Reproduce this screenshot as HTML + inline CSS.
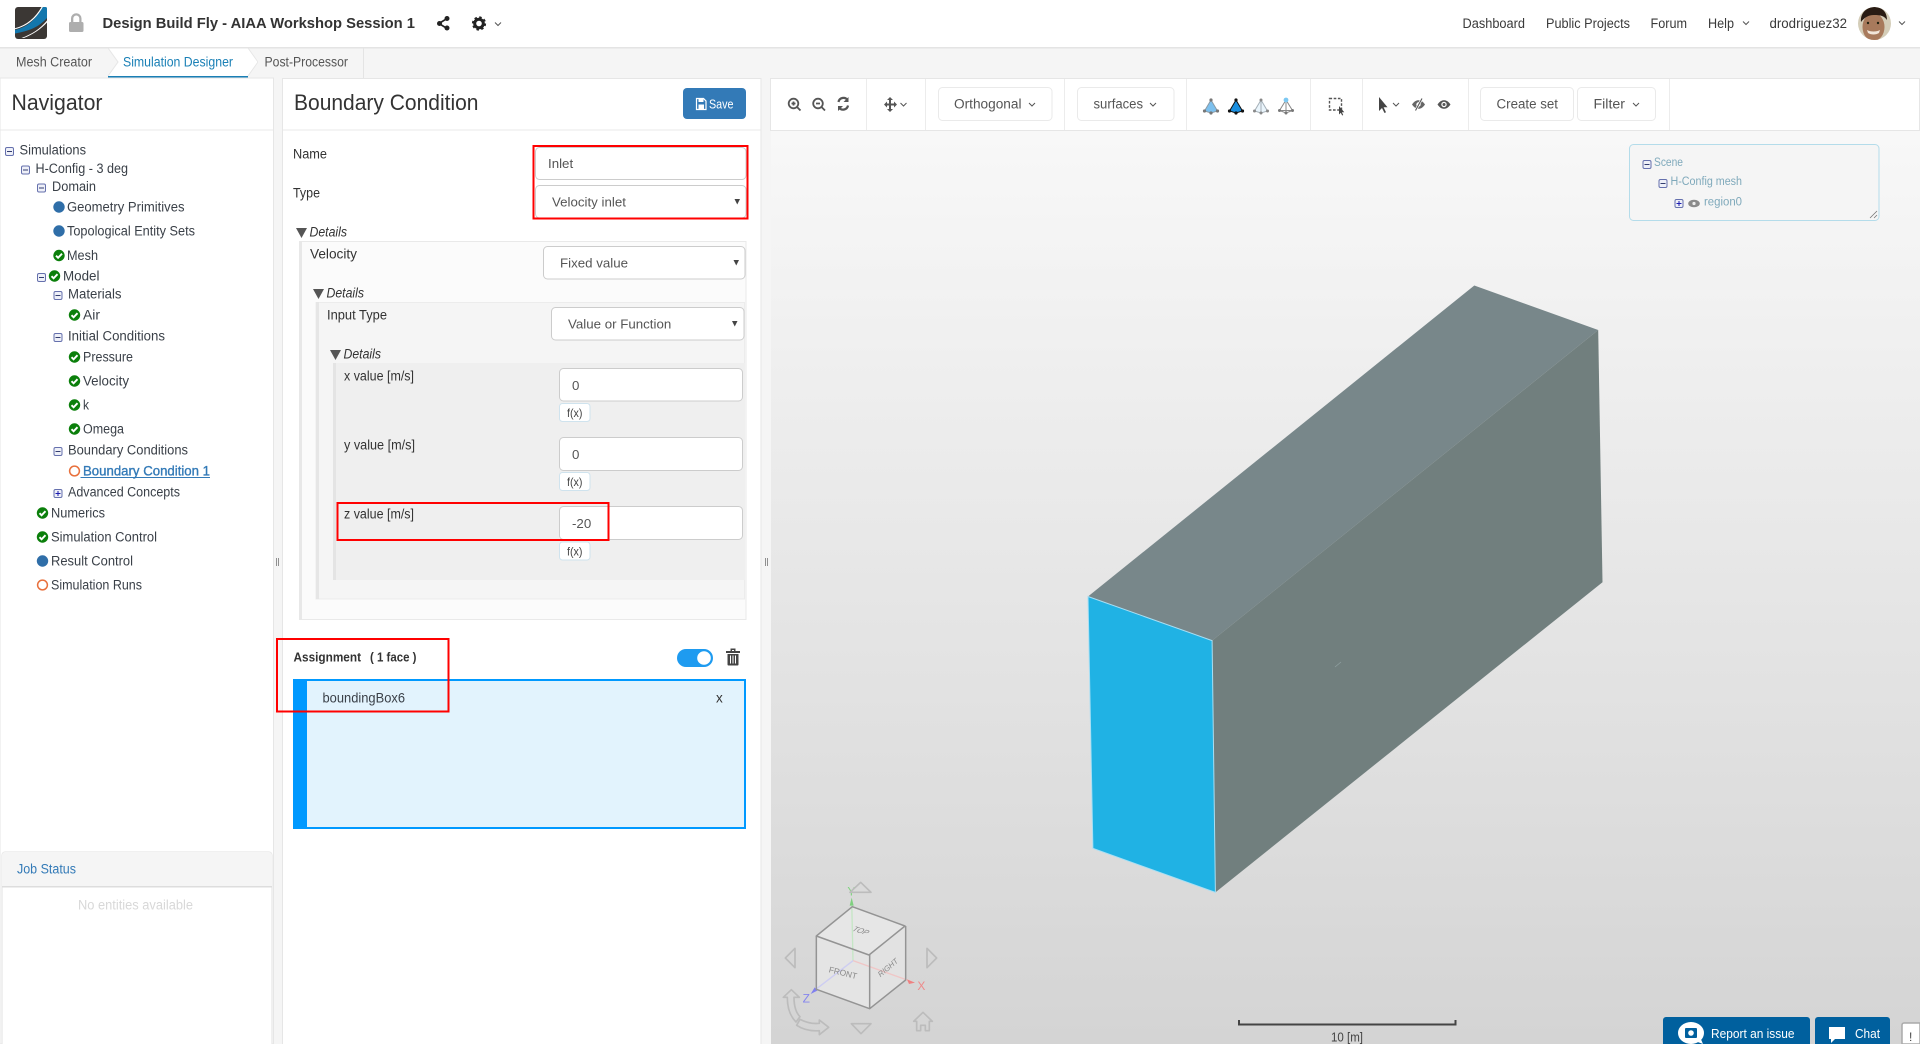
<!DOCTYPE html>
<html lang="en">
<head>
<meta charset="utf-8">
<title>Design Build Fly - AIAA Workshop Session 1</title>
<style>
html,body{margin:0;padding:0;width:1920px;height:1044px;overflow:hidden;background:#f5f5f5}
svg{display:block}
text{font-family:"Liberation Sans",sans-serif;dominant-baseline:central;fill:#333;font-size:13.5px}
.nav{fill:#3a3a3a;font-size:13.5px}
.tree{fill:#3a4048;font-size:13.5px}
.h{font-size:22px;fill:#333}
.sel{font-size:13.3px;fill:#555}
.it{font-style:italic;fill:#333;font-size:13.5px}
.fx{font-size:12px;fill:#444}
.tb{font-size:13.5px;fill:#555}
.sc{font-size:11.5px;fill:#7fa9bb}
.wh{fill:#fff;font-size:12.5px}
</style>
</head>
<body>
<svg width="1920" height="1044" viewBox="0 0 1920 1044" xmlns="http://www.w3.org/2000/svg">
<defs>
<linearGradient id="bg" x1="0" y1="0" x2="0" y2="1"><stop offset="0" stop-color="#f8f8f8"/><stop offset="1" stop-color="#d4d4d4"/></linearGradient>
<g id="mi"><rect x=".5" y=".5" width="8" height="8" rx="1.5" fill="#eef0f8" stroke="#6570ad"/><path d="M2 4.5h5" stroke="#333d70" stroke-width="1"/></g>
<g id="pl"><rect x=".5" y=".5" width="8" height="8" rx="1.5" fill="#eef0f8" stroke="#6570ad"/><path d="M2 4.5h5M4.5 2v5" stroke="#1c1cb0" stroke-width="1"/></g>
<g id="ck"><circle cx="0" cy="0" r="5.7" fill="#0b7f0b"/><path d="M-3 .2L-.9 2.3 3 -1.8" fill="none" stroke="#fff" stroke-width="1.9"/></g>
<circle id="bl" r="5.7" fill="#2f6ea8"/>
<circle id="or" r="4.9" fill="none" stroke="#e8703c" stroke-width="1.5"/>
<path id="car" d="M-3 -1.5L0 1.5 3 -1.5" fill="none" stroke="#555" stroke-width="1"/>
<path id="tri" d="M0 0h11L5.5 10z" fill="#555"/>
</defs>

<rect width="1920" height="1044" fill="#f5f5f5"/>

<!-- header -->
<rect width="1920" height="47" fill="#fff"/>
<rect y="47" width="1920" height="1.5" fill="#e4e4e4"/>
<rect x="15" y="7" width="32" height="32" rx="3" fill="#3b3734"/>
<path d="M47 8.500v9.500C39 27 29 31 15 33.500v-3.500C28 27 36 19 42.500 7H45.500a1.500 1.500 0 0 1 1.500 1.500z" fill="#1377ad"/>
<path d="M41.500 7C35 18 27 25 15 28.300v1C27.500 26 36 19 42.800 7z" fill="#fff"/>
<path d="M47 20.500C40 29 32 34 21.500 38h2.300C33 34.500 41 29 47 22.500z" fill="#fff"/>
<g fill="#aeaeae"><rect x="69" y="22" width="14.500" height="10" rx="1.500"/><path d="M71 22v-3.500a5.200 5.200 0 0 1 10.500 0V22h-2.200v-3.500a3 3 0 0 0-6 0V22z"/></g>
<text x="102.500" y="23.500" style="font-weight:bold;font-size:15px" textLength="312.500" lengthAdjust="spacingAndGlyphs">Design Build Fly - AIAA Workshop Session 1</text>
<g fill="#222"><circle cx="447" cy="18.500" r="2.500"/><circle cx="447" cy="28" r="2.500"/><circle cx="439.500" cy="23.500" r="2.500"/><path d="M439 22.500l8-5 .8 1.500-8 5zM439 24.500l8 5 .8-1.500-8-5z"/></g>
<g><circle cx="479" cy="23.500" r="4.300" fill="none" stroke="#222" stroke-width="3"/><circle cx="479" cy="23.500" r="6.200" fill="none" stroke="#222" stroke-width="1.800" stroke-dasharray="2.500 2.370"/></g>
<use href="#car" x="498" y="24"/>

<text x="1462.500" y="23.500" class="nav" textLength="62.500" lengthAdjust="spacingAndGlyphs">Dashboard</text>
<text x="1546" y="23.500" class="nav" textLength="84" lengthAdjust="spacingAndGlyphs">Public Projects</text>
<text x="1650.500" y="23.500" class="nav" textLength="36.500" lengthAdjust="spacingAndGlyphs">Forum</text>
<text x="1708" y="23.500" class="nav" textLength="26" lengthAdjust="spacingAndGlyphs">Help</text>
<use href="#car" x="1746" y="23"/>
<text x="1769.500" y="23.500" class="nav" textLength="77.500" lengthAdjust="spacingAndGlyphs">drodriguez32</text>
<clipPath id="av"><ellipse cx="1874.500" cy="23.500" rx="16.500" ry="16.500"/></clipPath>
<g clip-path="url(#av)">
<rect x="1857" y="6" width="35" height="35" fill="#d4cdb8"/>
<ellipse cx="1873.500" cy="27" rx="11" ry="14" fill="#a87a5c"/>
<path d="M1861 22c-1-10 7-15 13-15s13 3 13 13c-3-4-6-5-13-5-6 0-10 3-13 7z" fill="#2a1c14"/>
<path d="M1867 30c3 2 10 2 13 0l-1 3c-3 2-8 2-11 0z" fill="#f1e6da"/>
<circle cx="1868" cy="23" r="1.200" fill="#221"/><circle cx="1878" cy="23" r="1.200" fill="#221"/>
</g>
<use href="#car" x="1902" y="23"/>

<!-- tab bar -->
<rect y="48.500" width="363" height="29.500" fill="#f5f5f5"/>
<rect x="108" y="48.500" width="140" height="27.500" fill="#fff"/>
<path d="M108 48l10 14-10 14zM248 48l11 14-11 14z" fill="#fff"/>
<path d="M108 48l10 14-10 14" fill="#f5f5f5" stroke="#e6e6e6"/>
<path d="M248 48l10 14-10 14" fill="#fff" stroke="#e6e6e6"/>
<rect x="108" y="76" width="140" height="2.200" fill="#1a7fb5"/>
<rect x="363" y="48" width="1" height="30" fill="#e4e4e4"/>
<text x="16" y="62" style="fill:#555" textLength="76" lengthAdjust="spacingAndGlyphs">Mesh Creator</text>
<text x="123" y="62" style="fill:#1a80b6" textLength="110" lengthAdjust="spacingAndGlyphs">Simulation Designer</text>
<text x="264.500" y="62" style="fill:#555" textLength="83.500" lengthAdjust="spacingAndGlyphs">Post-Processor</text>

<!-- navigator panel -->
<rect x="0" y="78" width="273.500" height="966" fill="#fff" stroke="#e6e6e6"/>
<rect x="0" y="129.500" width="273" height="1" fill="#e8e8e8"/>
<text x="11.500" y="102.500" class="h" textLength="91" lengthAdjust="spacingAndGlyphs">Navigator</text>

<use href="#mi" x="5" y="147"/><text x="19.500" y="150" class="tree" textLength="66.500" lengthAdjust="spacingAndGlyphs">Simulations</text>
<use href="#mi" x="21" y="165.500"/><text x="35.500" y="168.500" class="tree" textLength="92.500" lengthAdjust="spacingAndGlyphs">H-Config - 3 deg</text>
<use href="#mi" x="37" y="183.500"/><text x="52" y="186.500" class="tree" textLength="44" lengthAdjust="spacingAndGlyphs">Domain</text>
<use href="#bl" x="59" y="207"/><text x="67" y="207" class="tree" textLength="117.500" lengthAdjust="spacingAndGlyphs">Geometry Primitives</text>
<use href="#bl" x="59" y="231"/><text x="67" y="231" class="tree" textLength="128" lengthAdjust="spacingAndGlyphs">Topological Entity Sets</text>
<use href="#ck" x="59" y="255.500"/><text x="67" y="255.500" class="tree" textLength="31" lengthAdjust="spacingAndGlyphs">Mesh</text>
<use href="#mi" x="37" y="273"/><use href="#ck" x="54.500" y="276"/><text x="63" y="276" class="tree" textLength="36.500" lengthAdjust="spacingAndGlyphs">Model</text>
<use href="#mi" x="53.500" y="291"/><text x="68" y="294" class="tree" textLength="53.500" lengthAdjust="spacingAndGlyphs">Materials</text>
<use href="#ck" x="74.500" y="315"/><text x="83" y="315" class="tree" textLength="17" lengthAdjust="spacingAndGlyphs">Air</text>
<use href="#mi" x="53.500" y="333"/><text x="68" y="336" class="tree" textLength="97" lengthAdjust="spacingAndGlyphs">Initial Conditions</text>
<use href="#ck" x="74.500" y="357"/><text x="83" y="357" class="tree" textLength="50" lengthAdjust="spacingAndGlyphs">Pressure</text>
<use href="#ck" x="74.500" y="381"/><text x="83" y="381" class="tree" textLength="46" lengthAdjust="spacingAndGlyphs">Velocity</text>
<use href="#ck" x="74.500" y="405"/><text x="83" y="405" class="tree" textLength="6" lengthAdjust="spacingAndGlyphs">k</text>
<use href="#ck" x="74.500" y="429"/><text x="83" y="429" class="tree" textLength="41" lengthAdjust="spacingAndGlyphs">Omega</text>
<use href="#mi" x="53.500" y="447"/><text x="68" y="450" class="tree" textLength="120" lengthAdjust="spacingAndGlyphs">Boundary Conditions</text>
<use href="#or" x="74.500" y="471"/><text x="83" y="471" style="fill:#337ab7;stroke:#337ab7;stroke-width:.35" textLength="127" lengthAdjust="spacingAndGlyphs">Boundary Condition 1</text>
<rect x="80.500" y="477" width="129.500" height="1" fill="#337ab7"/>
<use href="#pl" x="53.500" y="489"/><text x="68" y="492" class="tree" textLength="112" lengthAdjust="spacingAndGlyphs">Advanced Concepts</text>
<use href="#ck" x="42.500" y="513"/><text x="51" y="513" class="tree" textLength="54" lengthAdjust="spacingAndGlyphs">Numerics</text>
<use href="#ck" x="42.500" y="537"/><text x="51" y="537" class="tree" textLength="106" lengthAdjust="spacingAndGlyphs">Simulation Control</text>
<use href="#bl" x="42.500" y="561"/><text x="51" y="561" class="tree" textLength="82" lengthAdjust="spacingAndGlyphs">Result Control</text>
<use href="#or" x="42.500" y="585"/><text x="51" y="585" class="tree" textLength="91" lengthAdjust="spacingAndGlyphs">Simulation Runs</text>

<!-- job status -->
<rect x="2" y="852" width="270" height="200" rx="3" fill="#fff" stroke="#e2e2e2"/>
<path d="M2 887V855a3 3 0 0 1 3-3h264a3 3 0 0 1 3 3v32z" fill="#f5f5f5"/>
<rect x="2" y="886" width="270" height="1.500" fill="#ddd"/>
<text x="17" y="869" style="fill:#337ab7" textLength="59" lengthAdjust="spacingAndGlyphs">Job Status</text>
<text x="78" y="905" style="fill:#d8d8d8" textLength="115" lengthAdjust="spacingAndGlyphs">No entities available</text>

<!-- gutter handles -->
<path d="M276.500 558v8M278.500 558v8M765.500 558v8M767.500 558v8" stroke="#777" stroke-width=".8"/>

<!-- boundary condition panel -->
<rect x="282.500" y="78.500" width="478.500" height="966" fill="#fff" stroke="#e6e6e6"/>
<rect x="283" y="129.500" width="478" height="1" fill="#e8e8e8"/>
<text x="294" y="102.500" class="h" textLength="184.500" lengthAdjust="spacingAndGlyphs">Boundary Condition</text>
<rect x="683" y="88" width="63" height="31" rx="4" fill="#337ab7"/>
<path d="M696.500 98.500h7l2.500 2.500v8.500h-9.500z" fill="none" stroke="#fff" stroke-width="1.200"/>
<rect x="698.500" y="98.500" width="5" height="3.500" fill="#fff"/>
<rect x="698.500" y="104.500" width="5.500" height="4.500" fill="#fff"/>
<text x="709" y="104" style="fill:#fff;font-size:13px" textLength="24.500" lengthAdjust="spacingAndGlyphs">Save</text>

<text x="293" y="154" textLength="34" lengthAdjust="spacingAndGlyphs">Name</text>
<text x="293" y="193" textLength="27" lengthAdjust="spacingAndGlyphs">Type</text>
<rect x="535.500" y="147.500" width="210.500" height="32" rx="4" fill="#fff" stroke="#ccc"/>
<text x="548" y="163.500" class="sel">Inlet</text>
<rect x="535.500" y="185.500" width="210.500" height="32.500" rx="4" fill="#fff" stroke="#ccc"/>
<text x="552" y="202" class="sel">Velocity inlet</text>
<path d="M734.500 199h5.500l-2.750 5.500z" fill="#444"/>

<use href="#tri" x="296" y="228"/>
<text x="309.500" y="232" class="it" textLength="37.500" lengthAdjust="spacingAndGlyphs">Details</text>

<!-- nested box 1 -->
<rect x="299.500" y="241.500" width="446.500" height="378" fill="#fbfbfb" stroke="#e9e9e9"/>
<rect x="299" y="241" width="3" height="379" fill="#e8e8e8"/>
<text x="310" y="254" textLength="47" lengthAdjust="spacingAndGlyphs">Velocity</text>
<rect x="543.500" y="246.500" width="201.500" height="32.500" rx="4" fill="#fff" stroke="#ccc"/>
<text x="560" y="263" class="sel">Fixed value</text>
<path d="M733.500 260h5.500l-2.750 5.500z" fill="#444"/>
<use href="#tri" x="313" y="289"/>
<text x="326.500" y="293" class="it" textLength="37.500" lengthAdjust="spacingAndGlyphs">Details</text>

<!-- nested box 2 -->
<rect x="316" y="302.500" width="428.500" height="296.500" fill="#f5f5f5" stroke="#ececec"/>
<rect x="316" y="302" width="3" height="297" fill="#e6e6e6"/>
<text x="327" y="315" textLength="60" lengthAdjust="spacingAndGlyphs">Input Type</text>
<rect x="551.500" y="307.500" width="192.500" height="32.500" rx="4" fill="#fff" stroke="#ccc"/>
<text x="568" y="324" class="sel">Value or Function</text>
<path d="M732 321h5.500l-2.750 5.500z" fill="#444"/>
<use href="#tri" x="330" y="350"/>
<text x="343.500" y="354" class="it" textLength="37.500" lengthAdjust="spacingAndGlyphs">Details</text>

<!-- nested box 3 -->
<rect x="333" y="363" width="412" height="217" fill="#efefef"/>
<rect x="333" y="363" width="3" height="217" fill="#e4e4e4"/>
<text x="344" y="376" textLength="70" lengthAdjust="spacingAndGlyphs">x value [m/s]</text>
<rect x="559.500" y="368.500" width="183" height="32.500" rx="4" fill="#fff" stroke="#ccc"/>
<text x="572" y="385.500" class="sel">0</text>
<rect x="559.500" y="403.500" width="30.500" height="18" rx="3" fill="#fff" stroke="#cfe3ee"/>
<text x="567" y="413" class="fx" textLength="15.500" lengthAdjust="spacingAndGlyphs">f(x)</text>

<text x="344" y="445" textLength="71" lengthAdjust="spacingAndGlyphs">y value [m/s]</text>
<rect x="559.500" y="437.500" width="183" height="33" rx="4" fill="#fff" stroke="#ccc"/>
<text x="572" y="454.500" class="sel">0</text>
<rect x="559.500" y="472.500" width="30.500" height="18" rx="3" fill="#fff" stroke="#cfe3ee"/>
<text x="567" y="482" class="fx" textLength="15.500" lengthAdjust="spacingAndGlyphs">f(x)</text>

<text x="344" y="514" textLength="70" lengthAdjust="spacingAndGlyphs">z value [m/s]</text>
<rect x="559.500" y="506.500" width="183" height="33" rx="4" fill="#fff" stroke="#ccc"/>
<text x="572" y="523.500" class="sel">-20</text>
<rect x="559.500" y="542" width="30.500" height="18" rx="3" fill="#fff" stroke="#cfe3ee"/>
<text x="567" y="551.500" class="fx" textLength="15.500" lengthAdjust="spacingAndGlyphs">f(x)</text>

<!-- assignment -->
<text x="293.500" y="657" style="font-weight:bold;font-size:13px" textLength="67.500" lengthAdjust="spacingAndGlyphs">Assignment</text>
<text x="370" y="657" style="font-weight:bold;font-size:13px" textLength="46.500" lengthAdjust="spacingAndGlyphs">( 1 face )</text>
<rect x="677" y="649" width="36" height="18" rx="9" fill="#1e9bf0"/>
<circle cx="704" cy="658" r="6.800" fill="#fff"/>
<g fill="#444"><rect x="726" y="651" width="14" height="2"/><path d="M730.500 651v-2.500h5V651h-1.500v-1h-2v1z"/><path d="M727.500 654h11v10.500a1 1 0 0 1-1 1h-9a1 1 0 0 1-1-1z"/></g>
<path d="M730.500 655.500v8M733 655.500v8M735.500 655.500v8" stroke="#fff" stroke-width="1"/>
<rect x="294" y="680" width="451" height="148" fill="#e2f3fd" stroke="#0099ff" stroke-width="2"/>
<rect x="293" y="679" width="14" height="150" fill="#0099ff"/>
<text x="322.500" y="698" style="fill:#3a4048" textLength="82.500" lengthAdjust="spacingAndGlyphs">boundingBox6</text>
<text x="716" y="698" style="fill:#333">x</text>

<!-- viewer -->
<rect x="771" y="131" width="1149" height="913" fill="url(#bg)"/>
<rect x="770.500" y="78.500" width="1149" height="52" fill="#fff" stroke="#e6e6e6"/>
<path d="M866.500 79v51M925.500 79v51M1064.500 79v51M1186.500 79v51M1310.500 79v51M1362.500 79v51M1468.500 79v51M1669.500 79v51" stroke="#ececec"/>

<!-- toolbar icons -->
<g fill="none" stroke="#555" stroke-width="1.800">
<circle cx="793.500" cy="103.500" r="4.800"/><path d="M797 107l3.500 3.500M791.500 103.500h4M793.500 101.500v4"/>
<circle cx="818" cy="103.500" r="4.800"/><path d="M821.500 107l3.500 3.500M816 103.500h4"/>
<path d="M838.500 102a5 5 0 0 1 9-2M848 105.500a5 5 0 0 1-9 2" stroke-width="2.200"/>
</g>
<path d="M848.500 97v5h-5zM838 111v-5h5z" fill="#555"/>
<g fill="#555"><rect x="889" y="99" width="2" height="11"/><rect x="885" y="103.500" width="11" height="2"/><path d="M890 97l3 3h-6zM890 112l3-3h-6zM884 104.500l3-3v6zM897 104.500l-3-3v6z"/></g>
<use href="#car" x="903.500" y="104.500"/>
<rect x="938.500" y="87.500" width="113.500" height="33" rx="4" fill="#fff" stroke="#eaeaea"/>
<text x="954" y="104" class="tb" textLength="67.500" lengthAdjust="spacingAndGlyphs">Orthogonal</text>
<use href="#car" x="1032" y="104.500"/>
<rect x="1077.500" y="87.500" width="96.500" height="33" rx="4" fill="#fff" stroke="#eaeaea"/>
<text x="1093.500" y="104" class="tb" textLength="49.500" lengthAdjust="spacingAndGlyphs">surfaces</text>
<use href="#car" x="1153" y="104.500"/>

<!-- tetra icons -->
<g>
<path d="M1211 100l-6.500 11 6.500 2 6.500-2z" fill="#7cc0ee" stroke="#8a9aa5"/>
<g fill="#777"><circle cx="1211" cy="100" r="1.600"/><circle cx="1204.500" cy="111" r="1.600"/><circle cx="1217.500" cy="111" r="1.600"/><circle cx="1211" cy="113" r="1.600"/></g>
<path d="M1236 100l-6.500 11 6.500 2 6.500-2z" fill="#1a8fe0" stroke="#111"/>
<g fill="#111"><circle cx="1236" cy="100" r="1.600"/><circle cx="1229.500" cy="111" r="1.600"/><circle cx="1242.500" cy="111" r="1.600"/><circle cx="1236" cy="113" r="1.600"/></g>
<path d="M1261 100l-6.500 11 6.500 2 6.500-2zM1261 100v13" fill="#eaf5fc" stroke="#a5b0b8"/>
<g fill="#888"><circle cx="1261" cy="100" r="1.500"/><circle cx="1254.500" cy="111" r="1.500"/><circle cx="1267.500" cy="111" r="1.500"/><circle cx="1261" cy="113" r="1.500"/></g>
<path d="M1286 100l-6.500 10.500 6.500 2.500 6.500-2.500zM1286 100v13M1279.500 110.500h13" fill="none" stroke="#888"/>
<circle cx="1286" cy="100" r="2.400" fill="#7cc8f2"/>
<g fill="#777"><circle cx="1279.500" cy="110.500" r="1.500"/><circle cx="1292.500" cy="110.500" r="1.500"/><circle cx="1286" cy="113" r="1.500"/></g>
</g>
<rect x="1329.500" y="98.500" width="12" height="11.500" fill="none" stroke="#555" stroke-width="1.400" stroke-dasharray="2.600 1.600"/>
<path d="M1339 106v8.500l1.800-1.800 1.400 2.800 1-.5-1.300-2.700h2.400z" fill="#444"/>
<path d="M1379 97v14l3-3 2.500 5 1.500-.8-2.400-4.900h3.900z" fill="#444"/>
<use href="#car" x="1396" y="104.500"/>
<g><path d="M1412 104.500c2-3 4-4.300 6.500-4.300s4.500 1.300 6.500 4.300c-2 3-4 4.300-6.500 4.300s-4.500-1.300-6.500-4.300z" fill="#666"/><circle cx="1418.500" cy="104.500" r="2.200" fill="#fff"/><path d="M1422 98.500l-6.500 12" stroke="#fff" stroke-width="2.400"/><path d="M1422 98.500l-6.500 12" stroke="#555" stroke-width="1.100"/></g>
<g><path d="M1437.500 104.500c2-3 4-4.300 6.500-4.300s4.500 1.300 6.500 4.300c-2 3-4 4.300-6.500 4.300s-4.500-1.300-6.500-4.300z" fill="#555"/><circle cx="1444" cy="104.500" r="2.700" fill="#fff"/><circle cx="1444" cy="104.500" r="1.500" fill="#555"/></g>
<rect x="1480.500" y="87.500" width="93" height="33" rx="4" fill="#fff" stroke="#eaeaea"/>
<text x="1496.500" y="104" class="tb" textLength="61.500" lengthAdjust="spacingAndGlyphs">Create set</text>
<rect x="1577.500" y="87.500" width="78" height="33" rx="4" fill="#fff" stroke="#eaeaea"/>
<text x="1593.500" y="104" class="tb" textLength="31.500" lengthAdjust="spacingAndGlyphs">Filter</text>
<use href="#car" x="1636" y="104.500"/>

<!-- scene panel -->
<rect x="1629.500" y="144.500" width="249.500" height="76" rx="4" fill="#f5f5f5" stroke="#b4dcea"/>
<use href="#mi" x="1642.500" y="160"/><text x="1654" y="163" class="sc" textLength="29" lengthAdjust="spacingAndGlyphs">Scene</text>
<use href="#mi" x="1658.500" y="179"/><text x="1670.500" y="182" class="sc" textLength="71.500" lengthAdjust="spacingAndGlyphs">H-Config mesh</text>
<use href="#pl" x="1674.500" y="199"/>
<ellipse cx="1694" cy="203.500" rx="5.800" ry="3.800" fill="#8b8b8b"/><circle cx="1694" cy="203.500" r="1.600" fill="#eee"/>
<text x="1704" y="202.500" class="sc" textLength="38" lengthAdjust="spacingAndGlyphs">region0</text>
<path d="M1870 218l7-7M1874 218l3-3" stroke="#777" stroke-width=".8"/>

<!-- 3D box -->
<polygon points="1088,596.500 1474.300,285.500 1598.200,330 1212.100,640.600" fill="#78878a"/>
<polygon points="1212.100,640.600 1598.200,330 1602.500,582.200 1215.400,892.400" fill="#717f7e"/>
<polygon points="1088,596.500 1212.100,640.600 1215.400,892.400 1092.900,848.400" fill="#20b2e4" stroke="#a8dff4" stroke-width="1"/>
<path d="M1335 667l6-5" stroke="#8fa0a0" stroke-width=".8"/>

<!-- gizmo -->
<g transform="translate(770 860) scale(.33333)" style="filter:blur(.8px)">
<polygon points="247,140 405,198 297,285 139,228" fill="#e6e6e6"/>
<polygon points="139,228 297,285 299,446 139,388" fill="#e4e4e4"/>
<polygon points="297,285 405,198 407,360 299,446" fill="#e2e2e2"/>
<path d="M249 302L245 118" stroke="#c5e6c5" stroke-width="4"/>
<path d="M249 302L425 365" stroke="#f0c6c6" stroke-width="4"/>
<path d="M249 302L130 394" stroke="#cdcdf2" stroke-width="4"/>
<path d="M245 113l-6 24h12z" fill="#7fd07f"/>
<path d="M435 368l-24-10 6 14z" fill="#ee8080"/>
<path d="M122 402l20-10-8-10z" fill="#8080ee"/>
<g fill="none" stroke="#949494" stroke-width="4.500" stroke-linejoin="round">
<polygon points="247,140 405,198 297,285 139,228"/>
<path d="M139 228V388L299 446V285M299 446L407 360V198"/>
</g>
<text x="244" y="95" text-anchor="middle" style="font-size:36px;fill:#7ed47e">Y</text>
<text x="454" y="378" text-anchor="middle" style="font-size:36px;fill:#ee8a8a">X</text>
<text x="109" y="416" text-anchor="middle" style="font-size:36px;fill:#8585ee">Z</text>
<text transform="translate(219 338) rotate(14)" text-anchor="middle" style="font-size:25px;fill:#888">FRONT</text>
<text transform="translate(272 213) rotate(18) skewX(-30)" text-anchor="middle" style="font-size:23px;fill:#888">TOP</text>
<text transform="translate(354 323) rotate(-40)" text-anchor="middle" style="font-size:23px;font-style:italic;fill:#888">RIGHT</text>
<g fill="none" stroke="#bcbcbc" stroke-width="5" stroke-linejoin="round">
<polygon points="272,67 240,97 303,97"/>
<polygon points="75,265 46,294 75,323"/>
<polygon points="471,265 500,294 471,323"/>
<polygon points="244,491 303,491 273,521"/>
<path d="M431 484l28-27 28 27h-9v28h-12v-16h-14v16h-12v-28z"/>
<path d="M40 412l24-23 24 23H72c0 25 5 45 18 58l-12 16c-20-20-26-45-26-74z"/>
<path d="M90 478c20 10 40 14 58 12v-10l28 22-28 22v-12c-25 2-50-4-68-16z"/>
</g>
</g>

<!-- scale bar -->
<path d="M1239 1020v4.500h216.500v-4.500" fill="none" stroke="#444" stroke-width="2"/>
<text x="1331" y="1037" style="fill:#444;font-size:13px" textLength="32" lengthAdjust="spacingAndGlyphs">10 [m]</text>

<!-- bottom buttons -->
<path d="M1663 1044v-24a3 3 0 0 1 3-3h141a3 3 0 0 1 3 3v24z" fill="#00609e"/>
<path d="M1815 1044v-24a3 3 0 0 1 3-3h69a3 3 0 0 1 3 3v24z" fill="#00609e"/>
<ellipse cx="1691" cy="1033" rx="13" ry="11" fill="#fff"/>
<path d="M1695 1041l8 3-3-7z" fill="#fff"/>
<rect x="1685" y="1028" width="12" height="10" rx="1" fill="#00609e"/><circle cx="1691" cy="1033" r="2.800" fill="#fff"/>
<text x="1711" y="1034" class="wh" textLength="83.500" lengthAdjust="spacingAndGlyphs">Report an issue</text>
<path d="M1829 1027h16v12h-10l-4 4v-4h-2z" fill="#fff"/>
<text x="1855" y="1034" class="wh" textLength="25" lengthAdjust="spacingAndGlyphs">Chat</text>
<path d="M1920 1023h-16a2 2 0 0 0-2 2v19h18z" fill="#fff" stroke="#aaa" stroke-width="1.500"/>
<text x="1909" y="1037" style="font-size:12px;fill:#444">!</text>

<!-- red annotation boxes -->
<g fill="none" stroke="#f00" stroke-width="2">
<rect x="533.500" y="146" width="214" height="72.500"/>
<rect x="337.500" y="503" width="271" height="37"/>
<rect x="277" y="639" width="171.500" height="72.500"/>
</g>
</svg>
</body>
</html>
